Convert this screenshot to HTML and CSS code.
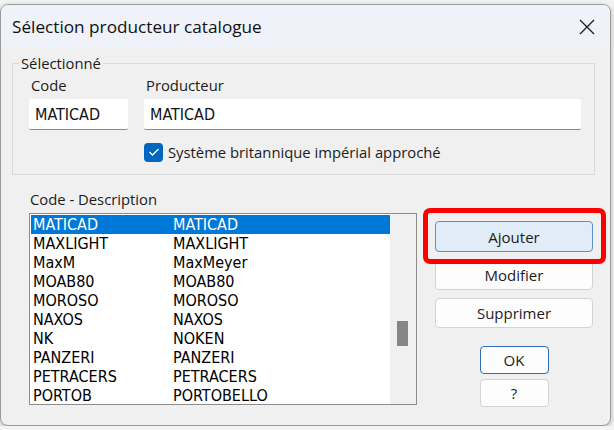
FILE: index.html
```html
<!DOCTYPE html>
<html lang="fr">
<head>
  <meta charset="UTF-8">
  <meta name="viewport" content="width=device-width, initial-scale=1.0">
  <title>Sélection producteur catalogue</title>
  <link rel="stylesheet" href="styles.css">
</head>
<body>
  <div class="window">
    <div class="titlebar">
      <span class="title">Sélection producteur catalogue</span>
      <span class="close">
        <svg width="16" height="16" viewBox="0 0 16 16"><path d="M1 1 L15 15 M15 1 L1 15" stroke="#1a1a1a" stroke-width="1.3" fill="none"/></svg>
      </span>
    </div>

    <div class="content">
      <fieldset class="group">
        <legend>Sélectionné</legend>
        <div class="fields">
          <div class="field code-field">
            <label for="code">Code</label>
            <input type="text" id="code" value="MATICAD">
          </div>
          <div class="field prod-field">
            <label for="prod">Producteur</label>
            <input type="text" id="prod" value="MATICAD">
          </div>
        </div>
        <div class="check-row">
          <span class="checkbox">
            <svg width="12" height="10" viewBox="0 0 12 10"><path d="M1.5 5 L4.5 8 L10.5 2" stroke="#fff" stroke-width="1.3" fill="none"/></svg>
          </span>
          <span>Système britannique impérial approché</span>
        </div>
      </fieldset>

      <div class="bottom">
        <div class="list-col">
          <div class="list-label">Code - Description</div>
          <div class="listbox">
            <div class="rows">
              <div class="row selected"><span>MATICAD</span><span>MATICAD</span></div>
              <div class="row"><span>MAXLIGHT</span><span>MAXLIGHT</span></div>
              <div class="row"><span>MaxM</span><span>MaxMeyer</span></div>
              <div class="row"><span>MOAB80</span><span>MOAB80</span></div>
              <div class="row"><span>MOROSO</span><span>MOROSO</span></div>
              <div class="row"><span>NAXOS</span><span>NAXOS</span></div>
              <div class="row"><span>NK</span><span>NOKEN</span></div>
              <div class="row"><span>PANZERI</span><span>PANZERI</span></div>
              <div class="row"><span>PETRACERS</span><span>PETRACERS</span></div>
              <div class="row"><span>PORTOB</span><span>PORTOBELLO</span></div>
            </div>
            <div class="scrollbar"><div class="thumb"></div></div>
          </div>
        </div>

        <div class="buttons">
          <button class="btn btn-add">Ajouter</button>
          <button class="btn">Modifier</button>
          <button class="btn">Supprimer</button>
          <button class="btn btn-small btn-ok">OK</button>
          <button class="btn btn-small btn-help">?</button>
          <div class="highlight"></div>
        </div>
      </div>
    </div>
  </div>
</body>
</html>
```

FILE: styles.css
```css
body {
  margin: 0;
  padding-top: 4px;
  background-color: #f4f4f4;
  font-family: "Open Sans", "Noto Sans", sans-serif;
  font-size: 14.8px;
  color: #1b1b1b;
}

.window {
  width: 611px;
  height: 422px;
  box-sizing: border-box;
  border: 1px solid #9a9a9a;
  border-radius: 8px;
  background-color: #f0f0f0;
  overflow: hidden;
  display: flex;
  flex-direction: column;
  box-shadow: 0 2px 6px rgba(0, 0, 0, 0.25);
}

.titlebar {
  height: 42px;
  flex: none;
  background-color: #eff2f8;
  display: flex;
  align-items: center;
  justify-content: space-between;
  padding: 0 15px 0 11px;
}

.title {
  font-size: 17.2px;
  color: #111;
}

.close {
  display: flex;
  margin-top: 2px;
}

.content {
  padding: 6px 0 0 11px;
}

.group {
  margin: 0;
  width: 583px;
  box-sizing: border-box;
  border: 1px solid #dadada;
  padding: 0 13px 10px 6px;
  height: 122px;
}

.group legend {
  padding: 0 2px;
  line-height: 20px;
}

.fields {
  display: flex;
  gap: 16px;
  padding: 2px 0 0 10px;
}

.field {
  display: flex;
  flex-direction: column;
}

.field label {
  line-height: 20px;
  padding-left: 2px;
  margin-bottom: 4px;
}

.field input {
  height: 31px;
  box-sizing: border-box;
  border: none;
  border-bottom: 1px solid #8a8a8a;
  border-radius: 2px;
  background-color: #fff;
  padding: 0 6px;
  font-family: "DejaVu Sans Condensed", "DejaVu Sans", sans-serif;
  font-stretch: condensed;
  font-size: 16px;
  color: #111;
  outline: none;
}

.code-field input {
  width: 99px;
}

.prod-field input {
  width: 437px;
}

.check-row {
  display: flex;
  align-items: center;
  gap: 5px;
  margin: 12px 0 0 125px;
}

.checkbox {
  width: 19px;
  height: 19px;
  border-radius: 4px;
  background-color: #0067c0;
  display: flex;
  align-items: center;
  justify-content: center;
}

.bottom {
  display: flex;
  margin-top: 14px;
}

.list-col {
  margin-left: 17px;
}

.list-label {
  line-height: 20px;
  margin-left: 1px;
  margin-bottom: 4px;
}

.listbox {
  width: 388px;
  height: 192px;
  box-sizing: border-box;
  border: 1px solid #8c8c8c;
  background-color: #fff;
  display: flex;
  overflow: hidden;
}

.rows {
  flex: 1;
  padding: 1px 0 0 1px;
  font-family: "DejaVu Sans Condensed", "DejaVu Sans", sans-serif;
  font-stretch: condensed;
  font-size: 16px;
  color: #000;
}

.row {
  height: 19px;
  line-height: 19px;
  display: flex;
  padding-left: 2px;
}

.row span:first-child {
  width: 140px;
}

.row.selected {
  background-color: #0078d7;
  color: #fff;
}

.scrollbar {
  width: 26px;
  background-color: #f0f0f0;
  padding: 107px 0 0 7px;
  box-sizing: border-box;
}

.thumb {
  width: 11px;
  height: 25px;
  background-color: #868686;
}

.buttons {
  position: relative;
  margin-left: 18px;
  padding-top: 32px;
  display: flex;
  flex-direction: column;
  align-items: center;
  width: 158px;
}

.btn {
  width: 158px;
  height: 30px;
  margin-bottom: 8px;
  box-sizing: border-box;
  border: 1px solid #d3d3d3;
  border-radius: 4px;
  background-color: #fdfdfd;
  font-family: "Open Sans", "Noto Sans", sans-serif;
  font-size: 15px;
  color: #1b1b1b;
  padding: 0;
}

.btn-add {
  height: 31px;
  background-color: #e0ecf8;
  border-color: #5f8fc6;
}

.btn-small {
  width: 69px;
  height: 28px;
}

.btn-ok {
  margin-top: 10px;
  margin-bottom: 5px;
  border-color: #2f6fb5;
}

.highlight {
  position: absolute;
  left: -12px;
  top: 19px;
  width: 183px;
  height: 56px;
  box-sizing: border-box;
  border: 5px solid #ff0000;
  border-radius: 7px;
}
```
